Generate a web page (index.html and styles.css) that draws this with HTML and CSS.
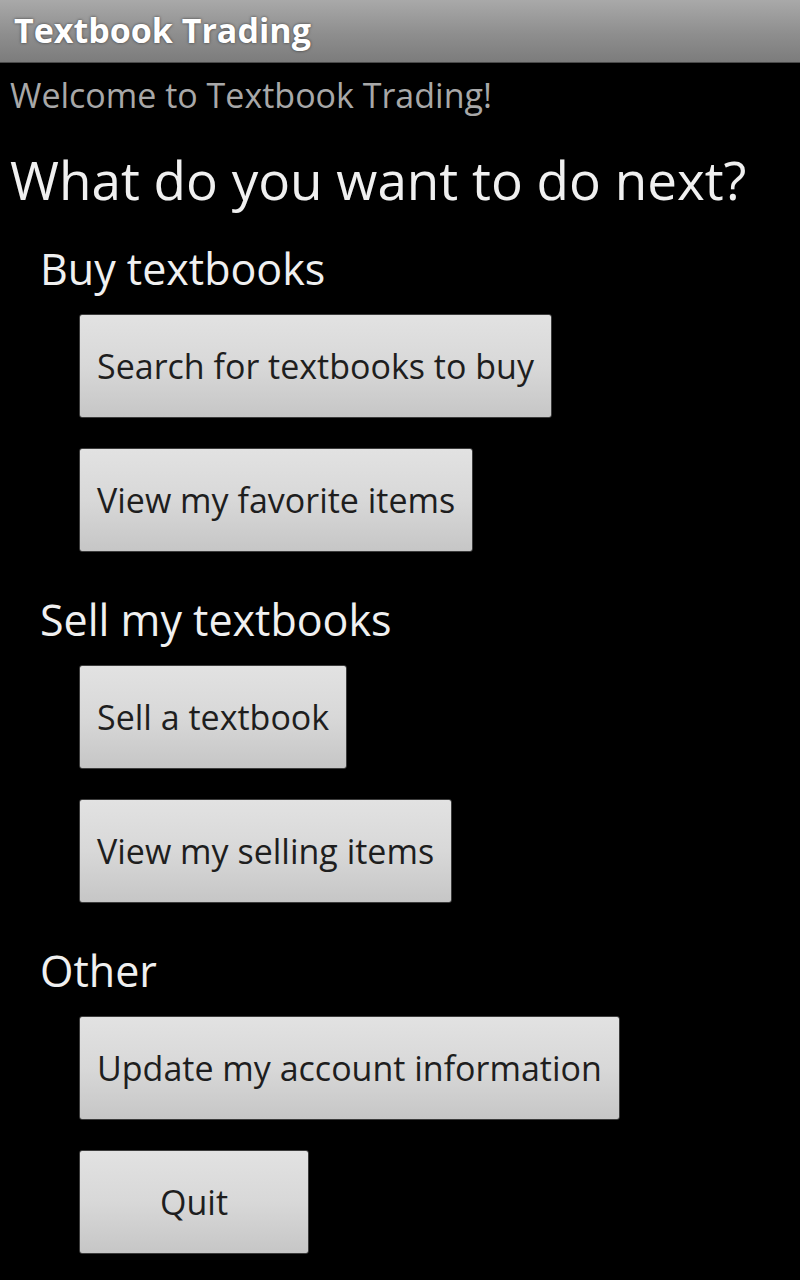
FILE: index.html
```html
<!DOCTYPE html>
<html>
<head>
<meta charset="utf-8">
<link rel="stylesheet" href="styles.css">
</head>
<body>
<header class="appbar"><span class="appbar-title">Textbook Trading</span></header>
<main class="content">
  <p class="welcome">Welcome to Textbook Trading!</p>
  <h1 class="question">What do you want to do next?</h1>
  <section class="group">
    <h2 class="group-title">Buy textbooks</h2>
    <div class="buttons">
      <button class="btn">Search for textbooks to buy</button>
      <button class="btn">View my favorite items</button>
    </div>
  </section>
  <section class="group">
    <h2 class="group-title">Sell my textbooks</h2>
    <div class="buttons">
      <button class="btn">Sell a textbook</button>
      <button class="btn">View my selling items</button>
    </div>
  </section>
  <section class="group">
    <h2 class="group-title">Other</h2>
    <div class="buttons">
      <button class="btn">Update my account information</button>
      <button class="btn">Quit</button>
    </div>
  </section>
</main>
</body>
</html>
```
FILE: styles.css
```css
html, body {
  margin: 0;
  padding: 0;
  background: #000;
}
body {
  font-family: "Open Sans", "Noto Sans", sans-serif;
  width: 800px;
  height: 1280px;
  overflow: hidden;
}
.appbar {
  height: 62px;
  border-bottom: 1px solid #4a4a4a;
  background: linear-gradient(to bottom, #a9a9a9 0%, #8e8e8e 55%, #7c7c7c 100%);
  display: flex;
  align-items: center;
  padding-left: 14px;
  box-sizing: content-box;
}
.appbar-title {
  color: #fff;
  font-weight: 700;
  font-size: 34px;
  text-shadow: 0 0 3px rgba(0,0,0,0.6);
  line-height: 1;
  margin-top: -2px;
}
.content {
  padding: 0 10px;
}
.welcome {
  margin: 0;
  padding-top: 10px;
  color: #a8a8a8;
  font-size: 34px;
  line-height: 44px;
}
.question {
  margin: 0;
  padding-top: 28px;
  color: #f0f0f0;
  font-weight: 400;
  font-size: 53px;
  line-height: 70px;
}
.group {
  padding-left: 30px;
  padding-top: 26px;
}
.group-title {
  margin: 0;
  color: #f0f0f0;
  font-weight: 400;
  font-size: 43px;
  line-height: 56px;
}
.buttons {
  display: flex;
  flex-direction: column;
  align-items: flex-start;
  gap: 30px;
  padding-left: 39px;
  padding-top: 17px;
  padding-bottom: 14px;
}
.btn {
  font-family: inherit;
  height: 104px;
  min-width: 230px;
  padding: 0 17px;
  border: 1px solid #3c3c3c;
  border-radius: 3px;
  background: linear-gradient(to bottom, #e2e2e2 0%, #d8d8d8 50%, #c6c6c6 100%);
  color: #1e1e1e;
  font-size: 34px;
  text-align: center;
}
```
